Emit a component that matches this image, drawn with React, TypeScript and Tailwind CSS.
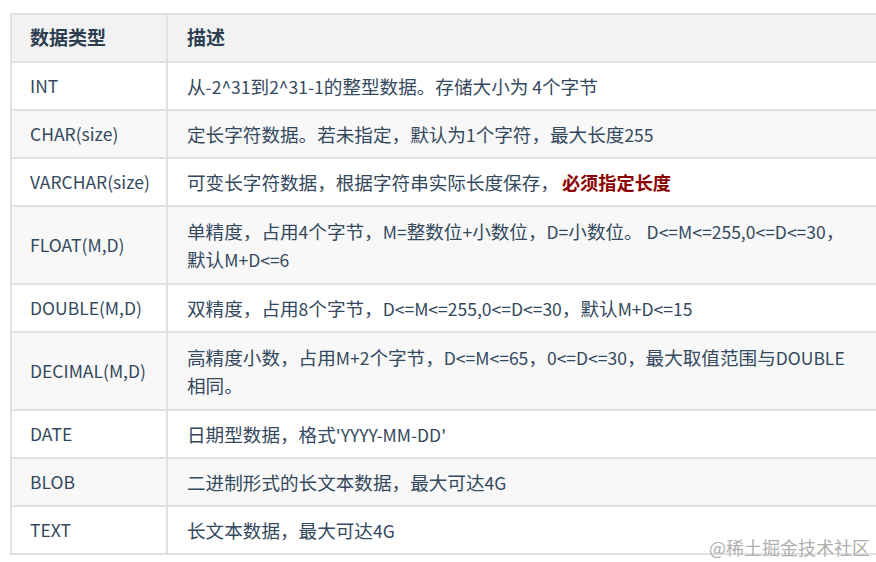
import React from "react";

type Row = {
  type: string;
  lines: string[];
  strong?: string;
  tall?: boolean;
};

const rows: Row[] = [
  { type: "INT", lines: ["从-2^31到2^31-1的整型数据。存储大小为 4个字节"] },
  { type: "CHAR(size)", lines: ["定长字符数据。若未指定，默认为1个字符，最大长度255"] },
  { type: "VARCHAR(size)", lines: ["可变长字符数据，根据字符串实际长度保存，"], strong: "必须指定长度" },
  {
    type: "FLOAT(M,D)",
    lines: ["单精度，占用4个字节，M=整数位+小数位，D=小数位。 D<=M<=255,0<=D<=30，", "默认M+D<=6"],
    tall: true,
  },
  { type: "DOUBLE(M,D)", lines: ["双精度，占用8个字节，D<=M<=255,0<=D<=30，默认M+D<=15"] },
  {
    type: "DECIMAL(M,D)",
    lines: ["高精度小数，占用M+2个字节，D<=M<=65，0<=D<=30，最大取值范围与DOUBLE", "相同。"],
    tall: true,
  },
  { type: "DATE", lines: ["日期型数据，格式'YYYY-MM-DD'"] },
  { type: "BLOB", lines: ["二进制形式的长文本数据，最大可达4G"] },
  { type: "TEXT", lines: ["长文本数据，最大可达4G"] },
];

// latin runs sit a bit smaller than the chinese glyphs in the screenshot
const mixed = (text: string) =>
  text.split(/([\x20-\x7e]+)/).map((part, i) =>
    /^[\x20-\x7e]+$/.test(part) ? (
      <span key={i} className="text-[17.5px]">
        {part}
      </span>
    ) : (
      <React.Fragment key={i}>{part}</React.Fragment>
    )
  );

const App: React.FC = () => {
  return (
    <div
      className="relative h-[562px] w-[876px] overflow-hidden bg-white pt-[13px] pl-[10px] text-[18.6px] leading-[27px] text-[#34495e]"
      style={{ fontFamily: '"Noto Sans CJK SC", "Noto Sans", sans-serif' }}
    >
      <div className="w-[880px] border-t-2 border-l-2 border-[#dfe2e5]">
        {/* header */}
        <div className="flex h-[48px] border-b-2 border-[#dfe2e5] bg-[#f2f2f2] text-[19px] font-bold text-[#2c3e50]">
          <div className="flex w-[156px] shrink-0 items-center border-r-2 border-[#dfe2e5] px-[18px] pb-[4px]">数据类型</div>
          <div className="flex flex-1 items-center px-[19px] pb-[4px]">描述</div>
        </div>
        {rows.map((row, i) => (
          <div
            key={row.type}
            className={`flex border-b-2 border-[#dfe2e5] ${row.tall ? "h-[78px]" : "h-[48px]"} ${
              i % 2 === 1 ? "bg-[#f8f8f8]" : "bg-white"
            }`}
          >
            <div className="flex w-[156px] shrink-0 items-center border-r-2 border-[#dfe2e5] px-[18px] pb-[1px] text-[17.5px]">
              {row.type}
            </div>
            <div className="flex min-w-0 flex-1 flex-col justify-center pl-[19px] pr-[14px] pb-[1px]">
              {row.lines.map((line, j) => (
                <div key={j} className="whitespace-nowrap">
                  {mixed(line)}
                  {row.strong && j === row.lines.length - 1 && (
                    <strong className="ml-[3px] text-[18.2px] font-bold text-[#8b0000]">{row.strong}</strong>
                  )}
                </div>
              ))}
            </div>
          </div>
        ))}
      </div>
      <span className="absolute right-[6px] bottom-[4px] text-[18px] leading-[22px] text-[#b0b0b0]">@稀土掘金技术社区</span>
    </div>
  );
};

export default App;
